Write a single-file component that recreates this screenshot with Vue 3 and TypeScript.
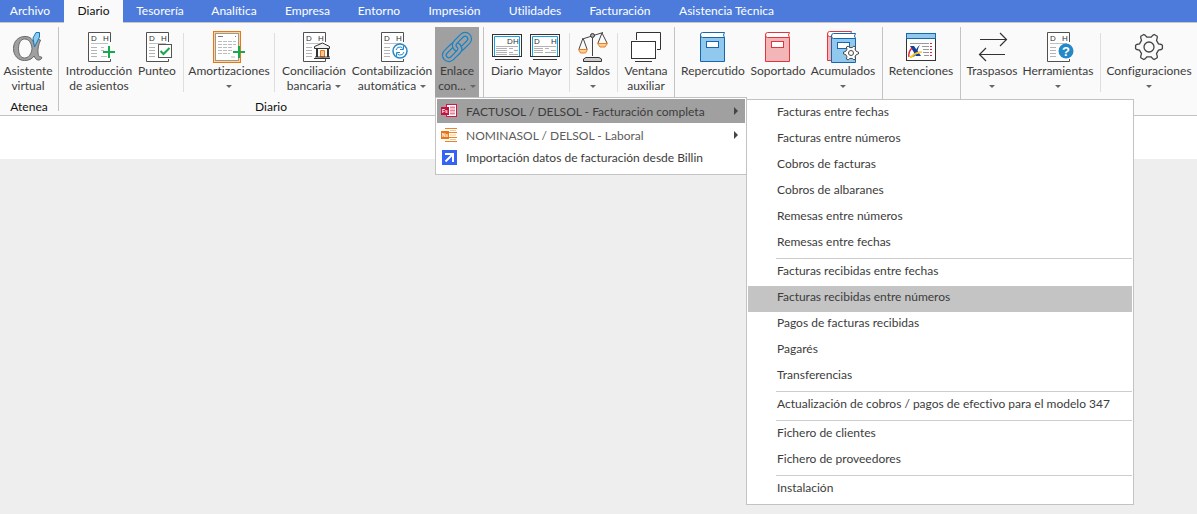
<script setup lang="ts">
import { ref } from 'vue'

interface Glyph {
  char: string
  x: number
  y: number
  kind: string
}
interface Tool {
  id: string
  icon: string
  lines: string[]
  caret?: boolean
  menu?: boolean
  glyphs?: Glyph[]
}
interface Group {
  id: string
  title: string
  tools: (Tool | null)[]
}

const tabs = ['Archivo', 'Diario', 'Tesorería', 'Analítica', 'Empresa', 'Entorno', 'Impresión', 'Utilidades', 'Facturación', 'Asistencia Técnica']
const activeTab = ref('Diario')

const debitCredit = (dx: number, hx: number, y: number): Glyph[] => [
  { char: 'D', x: dx, y, kind: 'mini' },
  { char: 'H', x: hx, y, kind: 'mini' },
]
const sheet = debitCredit(8, 20, 10)

function gearPath(cx: number, cy: number, outer: number, inner: number): string {
  const points: string[] = []
  for (let tooth = 0; tooth < 6; tooth++) {
    const angle = (tooth * Math.PI) / 3
    const corners: [number, number][] = [[inner, -0.32], [outer - 1, -0.2], [outer, -0.13], [outer, 0.13], [outer - 1, 0.2], [inner, 0.32]]
    for (const [radius, turn] of corners) {
      points.push(`${(cx + radius * Math.cos(angle + turn)).toFixed(1)} ${(cy + radius * Math.sin(angle + turn)).toFixed(1)}`)
    }
  }
  return `M${points.join('L')}Z`
}

const groups: Group[] = [
  { id: 'atenea', title: 'Atenea', tools: [{ id: 'asistente', icon: 'alpha', lines: ['Asistente', 'virtual'] }] },
  {
    id: 'diario',
    title: 'Diario',
    tools: [
      { id: 'intro', icon: 'doc-plus', lines: ['Introducción', 'de asientos'], glyphs: sheet },
      { id: 'punteo', icon: 'doc-check', lines: ['Punteo'], glyphs: sheet },
      null,
      { id: 'amort', icon: 'amort', lines: ['Amortizaciones', ''], caret: true },
      null,
      { id: 'concil', icon: 'doc-bank', lines: ['Conciliación', 'bancaria'], caret: true, glyphs: sheet },
      { id: 'contab', icon: 'doc-sync', lines: ['Contabilización', 'automática'], caret: true, glyphs: sheet },
      { id: 'enlace', icon: 'link', lines: ['Enlace', 'con...'], caret: true, menu: true },
    ],
  },
  {
    id: 'ver',
    title: '',
    tools: [
      { id: 'libro-diario', icon: 'screen-diario', lines: ['Diario'], glyphs: debitCredit(16, 22, 13) },
      { id: 'mayor', icon: 'screen-mayor', lines: ['Mayor'], glyphs: debitCredit(5, 22, 13) },
      null,
      { id: 'saldos', icon: 'scale', lines: ['Saldos', ''], caret: true },
      null,
      { id: 'ventana', icon: 'windows', lines: ['Ventana', 'auxiliar'] },
    ],
  },
  {
    id: 'iva',
    title: '',
    tools: [
      { id: 'repercutido', icon: 'book-blue', lines: ['Repercutido'] },
      { id: 'soportado', icon: 'book-red', lines: ['Soportado'] },
      { id: 'acumulados', icon: 'books', lines: ['Acumulados', ''], caret: true },
    ],
  },
  { id: 'irpf', title: '', tools: [{ id: 'retenciones', icon: 'tax', lines: ['Retenciones'] }] },
  {
    id: 'util',
    title: '',
    tools: [
      { id: 'traspasos', icon: 'arrows', lines: ['Traspasos', ''], caret: true },
      { id: 'herramientas', icon: 'doc-help', lines: ['Herramientas', ''], caret: true, glyphs: [...sheet, { char: '?', x: 20, y: 25, kind: 'question' }] },
      null,
      { id: 'config', icon: 'gear', lines: ['Configuraciones', ''], caret: true },
    ],
  },
]

const links = [
  { icon: 'factusol', mark: 'Fs', text: 'FACTUSOL / DELSOL - Facturación completa', sub: true },
  { icon: 'nominasol', mark: 'Ns', text: 'NOMINASOL / DELSOL - Laboral', sub: true },
  { icon: 'billin', mark: '', text: 'Importación datos de facturación desde Billin', sub: false },
]

const sections = [
  ['Facturas entre fechas', 'Facturas entre números', 'Cobros de facturas', 'Cobros de albaranes', 'Remesas entre números', 'Remesas entre fechas'],
  ['Facturas recibidas entre fechas', 'Facturas recibidas entre números', 'Pagos de facturas recibidas', 'Pagarés', 'Transferencias'],
  ['Actualización de cobros / pagos de efectivo para el modelo 347'],
  ['Fichero de clientes', 'Fichero de proveedores'],
  ['Instalación'],
]
const current = ref('Facturas recibidas entre números')
</script>

<template>
  <div class="app">
    <svg class="sprite" aria-hidden="true">
      <symbol id="doc" viewBox="0 0 32 32">
        <path d="M27.5 11V1.5H5.5V30.5H27.5V28" fill="#fff" stroke="#505050" />
        <path d="M8 12.5H25" stroke="#c0c0c0" />
        <path d="M8 16.5H14M8 19.5H14M8 22.5H14M8 25.5H14" stroke="#b4b4b4" />
      </symbol>
      <symbol id="alpha" viewBox="0 0 32 32">
        <path fill-rule="evenodd" d="M13 5.500C18 5.500 21 8 22.500 14L25 8L28.500 9C26.500 14 25.500 18 26 22C26.500 25 27.500 27 29 25.500L30 27C28 30 24 30 22 25C20 28 17 29.500 12.500 29.500C6 29.500 1.500 24.500 1.500 17.500C1.500 10.500 6 5.500 13 5.500ZM12.500 8C9 8 6.500 12 6.500 17.500C6.500 23 8.500 27 12.500 27C16.500 27 19.500 23 20 17.500C19.500 12 17 8 12.500 8Z" fill="#a0a0a0" stroke="#686868" />
        <path d="M22.500 16L21 7L24 1.500H27.500V6Z" fill="#8fcbea" stroke="#1778b8" />
      </symbol>
      <symbol id="doc-plus" viewBox="0 0 32 32">
        <use href="#doc" width="32" height="32" />
        <path d="M18 16.500H21M18 19.500H21M18 25.500H24" stroke="#c0c0c0" />
        <path d="M20 21H32M26 15V27" stroke="#16aa4b" stroke-width="2" />
      </symbol>
      <symbol id="doc-check" viewBox="0 0 32 32">
        <use href="#doc" width="32" height="32" />
        <rect x="17.500" y="13.500" width="13" height="13" fill="#fff" stroke="#555" />
        <path d="M19.500 20L22.500 23L28.500 17" fill="none" stroke="#16aa4b" stroke-width="2" />
      </symbol>
      <symbol id="amort" viewBox="0 0 32 32">
        <rect x="0.500" y="0.500" width="27" height="31" fill="#fbd592" stroke="#e87518" />
        <rect x="2.500" y="2.500" width="23" height="27" fill="#fff" stroke="#999" />
        <path d="M5 5.500H10M22 5.500H23" stroke="#777" />
        <path d="M5 10.500H23M5 13.500H23M5 16.500H20M5 19.500H20M5 22.500H17M18 26H22" stroke="#bcbcbc" stroke-dasharray="4 1" />
        <path d="M20 21H32M26 15V27" stroke="#16aa4b" stroke-width="2" />
      </symbol>
      <symbol id="doc-bank" viewBox="0 0 32 32">
        <use href="#doc" width="32" height="32" />
        <path d="M16.500 17.500V15.500L24.500 12L31.500 15.500V17.500Z" fill="#f2f2f2" stroke="#333" />
        <path d="M18 18H31V26H18Z" fill="#fff" />
        <path d="M19 18V26M30 18V26" stroke="#333" stroke-width="2" />
        <path d="M22.500 26V19.500H26.500V26Z" fill="#f9c78f" stroke="#e87518" />
        <path d="M17 26H32M16 27.500H32" stroke="#333" />
      </symbol>
      <symbol id="doc-sync" viewBox="0 0 32 32">
        <use href="#doc" width="32" height="32" />
        <circle cx="24" cy="20" r="7" fill="#fff" stroke="#2589c8" stroke-width="1.500" />
        <path d="M20 19Q21 15.500 24.500 16Q26 16 27.500 18M27.500 15V18.500H24M28 21Q27 24.500 23.500 24Q22 24 20.500 22M20.500 25V21.500H24" fill="none" stroke="#2589c8" />
      </symbol>
      <symbol id="doc-help" viewBox="0 0 32 32">
        <use href="#doc" width="32" height="32" />
        <circle cx="24" cy="20" r="7.500" fill="#2589c8" />
      </symbol>
      <symbol id="link" viewBox="0 0 32 32">
        <g fill="none" transform="rotate(-45 16 16)">
          <rect x="0" y="11.500" width="18" height="9" rx="4.500" stroke="#1b83c6" stroke-width="5" />
          <rect x="0" y="11.500" width="18" height="9" rx="4.500" stroke="#a0a0a0" stroke-width="2.600" />
          <rect x="14" y="11.500" width="18" height="9" rx="4.500" stroke="#1b83c6" stroke-width="5" />
          <rect x="14" y="11.500" width="18" height="9" rx="4.500" stroke="#a0a0a0" stroke-width="2.600" />
          <path d="M11 20.500H13.500Q18 20.500 18 16" stroke="#1b83c6" stroke-width="5" />
          <path d="M10 20.500H13.500Q18 20.500 18 15" stroke="#a0a0a0" stroke-width="2.600" />
        </g>
      </symbol>
      <symbol id="screen" viewBox="0 0 32 32">
        <rect x="1.500" y="3.500" width="29" height="22" fill="#fff" stroke="#333" />
        <path d="M3.500 25V5.500H28.500V25" fill="none" stroke="#16a0dc" />
        <path d="M4 28.500H28" stroke="#333" />
      </symbol>
      <symbol id="screen-diario" viewBox="0 0 32 32">
        <use href="#screen" width="32" height="32" />
        <path d="M5 15.500H27M5 17.500H16M5 19.500H16M5 21.500H16M5 23.500H16M18 17.500H22M23 19.500H27M18 21.500H22M18 23.500H27" stroke="#b2b2b2" />
      </symbol>
      <symbol id="screen-mayor" viewBox="0 0 32 32">
        <use href="#screen" width="32" height="32" />
        <path d="M5 15.500H27M5 17.500H14M5 19.500H14M5 21.500H14M16 17.500H20M22 19.500H27M16 21.500H27" stroke="#b2b2b2" />
      </symbol>
      <symbol id="scale" viewBox="0 0 32 32">
        <path d="M7 7.500L26 1.500M15.500 7V25M6 7L2 18M6 7L10 18M25 2L21 12M25 2L30 12" fill="none" stroke="#444" />
        <path d="M1.500 18.500H10.500L8.500 22H3.500ZM20.500 12.500H30.500L28 16H23Z" fill="#f9cf94" stroke="#e87f28" />
        <circle cx="15.500" cy="4.500" r="2" fill="#aaa" stroke="#333" />
        <path d="M6.500 30.500V28L9 26.500H22L24.500 28V30.500Z" fill="#ccc" stroke="#333" />
      </symbol>
      <symbol id="windows" viewBox="0 0 32 32">
        <path d="M6.500 9V1.500H30.500V18.500H27" fill="#fff" stroke="#333" />
        <rect x="1.500" y="10.500" width="24" height="17" fill="#fff" stroke="#333" />
        <path d="M5 30.500H22" stroke="#333" />
      </symbol>
      <symbol id="book" viewBox="0 0 32 32">
        <path d="M3.500 3V30.500H27.500V6.500H26" fill="var(--pale)" stroke="var(--ink)" />
        <path d="M27.500 1.500H5.500Q3.500 1.500 3.500 4Q3.500 6.500 5.500 6.500H27.500Q25.500 4 27.500 1.500Z" fill="#fff" stroke="var(--ink)" />
        <rect x="9.500" y="10.500" width="12" height="6" fill="#fff" stroke="var(--ink)" />
      </symbol>
      <symbol id="book-blue" viewBox="0 0 32 32"><use class="blue" href="#book" width="32" height="32" /></symbol>
      <symbol id="book-red" viewBox="0 0 32 32"><use class="red" href="#book" width="32" height="32" /></symbol>
      <symbol id="books" viewBox="0 0 32 32">
        <use class="red" href="#book" x="-3" y="-1" width="32" height="32" />
        <use class="blue" href="#book" x="1" y="1" width="32" height="32" />
        <path :d="gearPath(24, 22, 7.5, 5.500)" fill="#fff" stroke="#444" stroke-linejoin="round" />
        <circle cx="24" cy="22" r="2.500" fill="#fff" stroke="#444" />
      </symbol>
      <symbol id="tax" viewBox="0 0 32 32">
        <rect x="1.500" y="2.500" width="29" height="27" fill="#fff" stroke="#333" />
        <rect x="1.500" y="2.500" width="29" height="5" fill="#91c8f0" stroke="#1769a8" />
        <path d="M5 12.500H24M17 15.500H24M18 18.500H24M18 21.500H24M19 24.500H24" stroke="#999" />
        <path d="M25 12.500H27M25 15.500H27M25 18.500H27M25 21.500H27M25 24.500H27" stroke="#e12a3d" />
        <path d="M5 15H9L16 25H11Z" fill="#173c99" />
        <path d="M15 14C11 16 11 22 5 27L10 25C13 22 12 18 15 14Z" fill="#173c99" />
        <path d="M7 17Q3 21 4 26" fill="none" stroke="#e12a3d" stroke-width="1.500" />
        <path d="M5 26Q12 20 17 21Q10 22 6 27Z" fill="#ffcf22" stroke="#ffcf22" />
      </symbol>
      <symbol id="arrows" viewBox="0 0 32 32">
        <path d="M4 8.500H30M24 2L30.500 8.500L24 15M29 23.500H3.500M10 17L3.500 23.500L10 30" fill="none" stroke="#333" stroke-width="1.200" />
      </symbol>
      <symbol id="gear" viewBox="0 0 32 32">
        <path :d="gearPath(16, 16, 13.5, 10)" fill="none" stroke="#444" stroke-width="1.300" stroke-linejoin="round" />
        <circle cx="16" cy="16" r="5" fill="none" stroke="#444" stroke-width="1.300" />
      </symbol>
      <symbol id="factusol" viewBox="0 0 16 16">
        <rect x="5.500" y="1.500" width="10" height="12" fill="#fff" stroke="#d01848" />
        <path d="M9 4.500H14M9 7.500H14M9 10.500H14" stroke="#e98299" stroke-width="2" />
        <rect x="0" y="4" width="8" height="8" fill="#c8103e" />
      </symbol>
      <symbol id="nominasol" viewBox="0 0 16 16">
        <path d="M4 1.500H16M4 14.500H16M8 5.500H16M8 10.500H16" stroke="#f08222" />
        <path d="M9 3.500H15M9 8H15M9 12.500H15" stroke="#f7c499" />
        <rect x="0" y="4" width="8" height="8" fill="#ed7410" />
      </symbol>
      <symbol id="billin" viewBox="0 0 16 16">
        <rect x="1" y="0" width="15" height="15" fill="#3364f5" />
        <path d="M4 4H12V12M12 4L4.500 11.500" fill="none" stroke="#fff" stroke-width="2" />
      </symbol>
    </svg>

    <nav class="tabs">
      <button v-for="tab in tabs" :key="tab" type="button" :class="{ active: tab === activeTab }" @click="activeTab = tab">{{ tab }}</button>
    </nav>

    <div class="ribbon">
      <section v-for="group in groups" :key="group.id" class="group" :class="group.id">
        <div class="tools">
          <template v-for="(tool, i) in group.tools" :key="i">
            <span v-if="!tool" class="divider"></span>
            <div v-else class="cell">
              <button type="button" class="tool" :class="{ open: tool.menu }">
                <svg class="icon" width="32" height="32">
                  <use :href="'#' + tool.icon" />
                  <text v-for="glyph in tool.glyphs" :key="glyph.char" :x="glyph.x" :y="glyph.y" :class="glyph.kind">{{ glyph.char }}</text>
                </svg>
                <span v-for="(line, n) in tool.lines" :key="n" class="line">
                  <span v-if="line">{{ line }}</span>
                  <i v-if="tool.caret && n === 1" class="caret"></i>
                </span>
              </button>
              <div v-if="tool.menu" class="menu">
                <div v-for="(link, k) in links" :key="link.text" class="entry">
                  <button type="button" class="link" :class="{ open: k === 0, muted: link.sub }">
                    <svg width="16" height="16">
                      <use :href="'#' + link.icon" />
                      <text v-if="link.mark" x="1" y="10" class="badge">{{ link.mark }}</text>
                    </svg>
                    <span>{{ link.text }}</span>
                    <i v-if="link.sub" class="arrow"></i>
                  </button>
                  <div v-if="k === 0" class="submenu">
                    <div v-for="(section, s) in sections" :key="s" class="section">
                      <button v-for="item in section" :key="item" type="button" :class="{ current: item === current }" @click="current = item">{{ item }}</button>
                    </div>
                  </div>
                </div>
              </div>
            </div>
          </template>
        </div>
        <h2 v-if="group.title">{{ group.title }}</h2>
      </section>
    </div>
    <div class="strip"></div>
    <main class="workspace"></main>
  </div>
</template>

<style>
body {
  background: #eee;
}
</style>

<style scoped>
.app {
  display: flex;
  flex-direction: column;
  min-height: 100vh;
  overflow: hidden;
  background: #eee;
  color: #3c3c3c;
  font: 12px/15px Lato, "Open Sans", sans-serif;
  font-variant-ligatures: none;
}
.sprite {
  position: absolute;
  width: 0;
  height: 0;
}
.mini {
  font: 8px "Liberation Sans", sans-serif;
  fill: #333;
}
.question {
  font: bold 13px "Liberation Sans", sans-serif;
  fill: #fff;
}
.badge {
  font: bold 5px "Liberation Sans", sans-serif;
  fill: #fff;
}
.blue {
  --ink: #1667ad;
  --pale: #91c8ee;
}
.red {
  --ink: #e5343b;
  --pale: #f3b6b8;
}
button {
  border: 0;
  padding: 0;
  background: none;
  color: inherit;
  font: inherit;
  white-space: nowrap;
}
.tabs {
  display: grid;
  grid-template-columns: 64px 59px 74px 74px 73px 70px 81px 80px 90px 123px;
  height: 22px;
  background: #4d7bdb;
  border-bottom: 1px solid #c6c6c6;
}
.tabs button {
  padding-bottom: 2px;
  color: #fff;
}
.tabs button:first-child {
  padding-right: 4px;
}
.tabs .active {
  height: 23px;
  background: #fafafa;
  color: #111;
}
.ribbon {
  display: flex;
  height: 92px;
  background: #fafafa;
  border-bottom: 1px solid #c3c3c3;
}
.group {
  display: flex;
  flex-direction: column;
  margin: 4px 0;
  border-right: 1px solid #c3c3c3;
}
.group:last-child {
  border-right: 0;
}
.tools {
  display: grid;
  height: 70px;
}
.atenea .tools {
  grid-template-columns: 56px;
  padding-right: 2px;
}
.diario .tools {
  grid-template-columns: 74px 42px 10px 82px 9px 70px 86px 44px;
  padding: 0 4px 0 3px;
}
.ver .tools {
  grid-template-columns: 38px 38px 10px 38px 11px 46px;
  padding: 0 5px 0 4px;
}
.iva .tools {
  grid-template-columns: 66px 64px 66px;
  padding: 0 6px 0 5px;
}
.irpf .tools {
  grid-template-columns: 68px;
  padding: 0 5px 0 4px;
}
.util .tools {
  grid-template-columns: 56px 76px 8px 90px;
  padding: 0 3px;
}
.group h2 {
  height: 15px;
  margin: 2px 0 0;
  color: #111;
  font: inherit;
  text-align: center;
}
.divider {
  justify-self: center;
  width: 1px;
  height: 59px;
  margin-top: 6px;
  background: #dedede;
}
.cell {
  position: relative;
}
.tool {
  display: flex;
  flex-direction: column;
  align-items: center;
  width: 100%;
  height: 70px;
  padding-top: 4px;
}
.tool.open {
  background: #a0a0a0;
}
.icon {
  flex: none;
}
.line {
  display: flex;
  align-items: center;
  justify-content: center;
  gap: 4px;
  height: 15px;
}
.caret {
  margin-top: 2px;
  border: 3px solid transparent;
  border-top-color: #666;
  border-bottom: 0;
}
.menu {
  position: absolute;
  z-index: 2;
  top: 100%;
  left: 0;
  width: 308px;
  padding: 1px 1px 3px;
  border: 1px solid #c3c3c3;
  background: #fff;
}
.entry {
  position: relative;
}
.link {
  display: flex;
  align-items: center;
  gap: 9px;
  width: 100%;
  height: 24px;
  padding: 0 7px 0 4px;
}
.link:not(.muted) {
  padding-bottom: 3px;
}
.link.muted {
  color: #5c5c5c;
}
.link.open {
  background: #a0a0a0;
  color: #3c3c3c;
}
.arrow {
  margin-left: auto;
  border: 4px solid transparent;
  border-left-color: #444;
  border-right: 0;
}
.submenu {
  position: absolute;
  z-index: 3;
  top: 0;
  left: 309px;
  width: 384px;
  padding: 1px;
  border: 1px solid #c3c3c3;
  background: #fff;
}
.section + .section::before {
  content: "";
  display: block;
  height: 1px;
  margin: 1px 0 1px 28px;
  background: #cdcdcd;
}
.section button {
  display: block;
  width: 100%;
  height: 26px;
  padding: 0 0 6px 29px;
  text-align: left;
}
.section .current {
  background: #c4c4c4;
}
.strip {
  height: 43px;
  background: #fff;
}
.workspace {
  flex: 1;
}
</style>
